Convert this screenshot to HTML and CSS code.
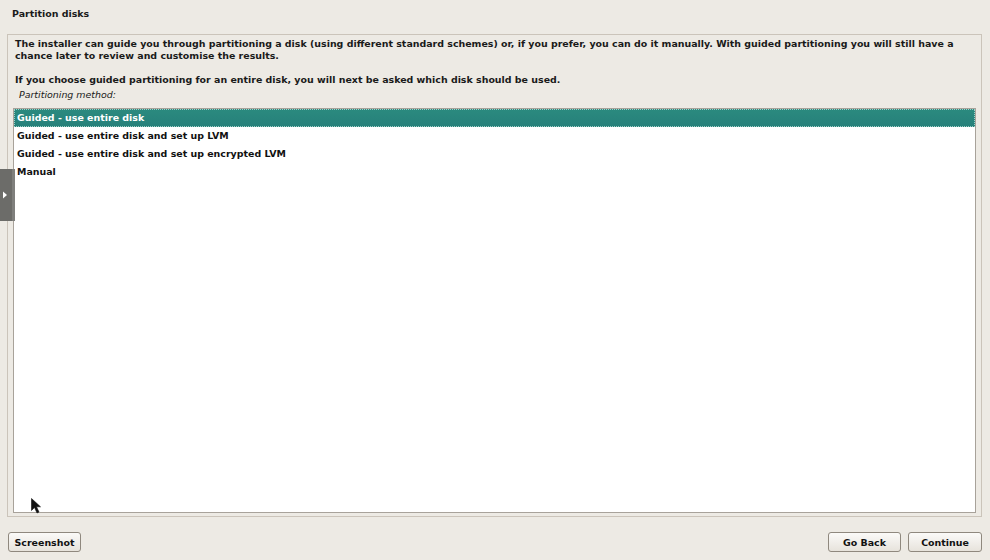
FILE: index.html
```html
<!DOCTYPE html>
<html>
<head>
<meta charset="utf-8">
<link rel="stylesheet" href="styles.css">
</head>
<body>
<div class="page">
  <div class="title">Partition disks</div>
  <div class="panel">
    <p class="desc">The installer can guide you through partitioning a disk (using different standard schemes) or, if you prefer, you can do it manually. With guided partitioning you will still have a chance later to review and customise the results.</p>
    <p class="desc">If you choose guided partitioning for an entire disk, you will next be asked which disk should be used.</p>
    <div class="label">Partitioning method:</div>
    <div class="listbox">
      <div class="row selected">Guided - use entire disk</div>
      <div class="row">Guided - use entire disk and set up LVM</div>
      <div class="row">Guided - use entire disk and set up encrypted LVM</div>
      <div class="row">Manual</div>
    </div>
  </div>
  <div class="buttons">
    <button class="btn">Screenshot</button>
    <div class="spacer"></div>
    <button class="btn">Go Back</button>
    <button class="btn">Continue</button>
  </div>
</div>
<div class="sidetab"><svg width="6" height="8" viewBox="0 0 6 8"><path d="M1 0.5 L5 4 L1 7.5 Z" fill="#ffffff"/></svg></div>
<svg class="cursor" width="12" height="18" viewBox="0 0 12 18"><path d="M0.5 0.5 L0.5 12.5 L3.5 9.5 L6 15 L8 14 L5.5 8.8 L9.5 8.8 Z" fill="#111" stroke="#111" stroke-width="0.6"/></svg>
</body>
</html>
```

FILE: styles.css
```css
html, body {
  margin: 0;
  padding: 0;
}
body {
  background: #edeae4;
  font-family: "DejaVu Sans", "Liberation Sans", sans-serif;
  font-weight: bold;
  font-size: 9.45px;
  color: #1a1a1a;
  width: 990px;
  height: 560px;
  overflow: hidden;
  position: relative;
}
.page {
  display: flex;
  flex-direction: column;
  height: 560px;
}
.title {
  padding: 8px 0 0 12px;
  height: 34px;
  box-sizing: border-box;
  line-height: 12px;
}
.panel {
  margin: 0 8px 0 7px;
  border: 1px solid #cbc4ba;
  height: 483px;
  box-sizing: border-box;
  padding: 3px 5px 3px 5px;
  display: flex;
  flex-direction: column;
}
.desc {
  margin: 0 0 12px 2px;
  line-height: 12px;
}
.desc + .desc {
  margin-bottom: 3px;
}
.label {
  font-weight: normal;
  font-style: italic;
  margin-left: 6px;
  line-height: 12px;
  margin-bottom: 7px;
}
.listbox {
  flex: 1;
  background: #ffffff;
  border: 1px solid #a8a29a;
  padding: 0;
}
.row {
  height: 18px;
  line-height: 18px;
  padding-left: 3px;
  color: #111;
}
.row.selected {
  background: linear-gradient(#2b8a7f, #26807a);
  color: #ffffff;
  outline: 1px dotted #9fd0c8;
  outline-offset: -1px;
}
.buttons {
  display: flex;
  align-items: center;
  padding: 15px 8px 0 8px;
  gap: 7px;
}
.spacer {
  flex: 1;
}
.btn {
  font-family: "DejaVu Sans", "Liberation Sans", sans-serif;
  font-weight: bold;
  font-size: 9.45px;
  color: #111;
  width: 73px;
  height: 20px;
  border: 1px solid #8f887e;
  border-radius: 3px;
  background: linear-gradient(#fbfaf8, #e7e3dc);
  padding: 0;
  margin: 0;
}
.btn:last-child {
  width: 74px;
}
.sidetab {
  position: absolute;
  left: 0;
  top: 169px;
  width: 15px;
  height: 52px;
  background: linear-gradient(to right, #6c6c69 0, #6c6c69 12px, #7f7f7c 12px);
  display: flex;
  align-items: center;
  padding-left: 2px;
  box-sizing: border-box;
}
.cursor {
  position: absolute;
  left: 31px;
  top: 498px;
}
```
